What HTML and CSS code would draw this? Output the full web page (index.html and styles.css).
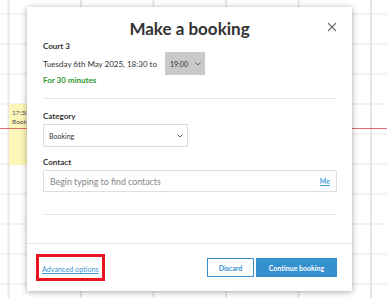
FILE: index.html
```html
<!DOCTYPE html>
<html lang="en">
<head>
	<title>Make a booking</title>
	<link rel="stylesheet" href="styles.css">
</head>

<body>
	<div id="calendar">
		<div class="event">
			<p>17:30</p>
			<p>Booking</p>
		</div>
		<div class="now-line"></div>
	</div>

	<div class="modal">
		<div class="modal-head">
			<h1>Make a booking</h1>
			<span class="close">
				<svg width="10" height="10" viewBox="0 0 10 10"><path d="M1 1L9 9M9 1L1 9" stroke="#6b6b6b" stroke-width="1.1" fill="none"/></svg>
			</span>
		</div>

		<div class="modal-body">
			<p class="label">Court 3</p>
			<div class="date-row">
				<span>Tuesday 6th May 2025, 18:30 to</span>
				<div class="time-select">
					<span>19:00</span>
					<svg width="6" height="4" viewBox="0 0 6 4"><path d="M0.5 0.5L3 3L5.5 0.5" stroke="#555" stroke-width="0.9" fill="none"/></svg>
				</div>
			</div>
			<p class="duration">For 30 minutes</p>

			<div class="divider"></div>

			<p class="label field-label">Category</p>
			<div class="select">
				<span>Booking</span>
				<svg width="6" height="4" viewBox="0 0 6 4"><path d="M0.5 0.5L3 3L5.5 0.5" stroke="#555" stroke-width="0.9" fill="none"/></svg>
			</div>

			<p class="label field-label contact-label">Contact</p>
			<div class="input">
				<span class="placeholder">Begin typing to find contacts</span>
				<a href="#" class="me">Me</a>
			</div>

			<div class="divider last"></div>
		</div>

		<div class="modal-foot">
			<div class="highlight">
				<a href="#">Advanced options</a>
			</div>
			<div class="buttons">
				<button class="discard">Discard</button>
				<button class="continue">Continue booking</button>
			</div>
		</div>
	</div>
</body>
</html>
```

FILE: styles.css
```css
body {
	margin: 0;
	padding: 0;
	font-family: 'Lato', 'Open Sans', sans-serif;
	color: #333;
}

p {
	margin: 0;
}

#calendar {
	position: relative;
	width: 387px;
	height: 298px;
	background-color: #fff;
	background-image: linear-gradient(to right, #e6e6e6 1.5px, transparent 1.5px), linear-gradient(to bottom, #e6e6e6 1.5px, transparent 1.5px);
	background-size: 72.5px 100%, 100% 30px;
	background-position: 7.5px 0, 0 13.5px;
}

.event {
	position: absolute;
	left: 9px;
	top: 104px;
	width: 60px;
	height: 61px;
	background: #fcf6b9;
	padding: 4px 3px;
	box-sizing: border-box;
	font-size: 6.5px;
	line-height: 9px;
	color: #555;
}

.now-line {
	position: absolute;
	left: 0;
	right: 0;
	top: 128px;
	height: 1px;
	background: #e26b6b;
}

.modal {
	position: absolute;
	left: 27px;
	top: 7px;
	width: 325px;
	height: 284px;
	background: #fff;
	box-shadow: 0 1px 6px rgba(0, 0, 0, 0.35);
	display: flex;
	flex-direction: column;
}

.modal-head {
	position: relative;
	padding-top: 10px;
	text-align: center;
}

.modal-head h1 {
	margin: 0;
	font-size: 17px;
	line-height: 24px;
	font-weight: 700;
	color: #333;
}

.close {
	position: absolute;
	right: 15px;
	top: 15px;
	line-height: 0;
}

.modal-body {
	padding: 0 15px 0 16px;
}

.label {
	font-size: 8px;
	line-height: 10px;
	font-weight: 700;
	color: #333;
}

.date-row {
	margin-top: 1px;
	height: 23px;
	display: flex;
	align-items: center;
	font-size: 8px;
}

.time-select {
	margin-left: 8px;
	width: 40px;
	height: 23px;
	background: #c9c9c9;
	display: flex;
	align-items: center;
	justify-content: space-between;
	padding: 0 4px 0 5px;
	box-sizing: border-box;
	font-size: 7px;
}

.duration {
	font-size: 8px;
	line-height: 10px;
	color: #2e9a2e;
	font-weight: 700;
}

.divider {
	margin-top: 13px;
	height: 1px;
	background: #e6e6e6;
}

.divider.last {
	margin-top: 22px;
}

.field-label {
	margin-top: 12px;
}

.contact-label {
	margin-top: 10px;
}

.select {
	margin-top: 3px;
	width: 145px;
	height: 23px;
	border: 1px solid #dcdcdc;
	box-sizing: border-box;
	display: flex;
	align-items: center;
	justify-content: space-between;
	padding: 0 4px 0 5px;
	font-size: 7px;
}

.input {
	margin-top: 3px;
	height: 22px;
	border: 1px solid #dedede;
	box-sizing: border-box;
	display: flex;
	align-items: center;
	justify-content: space-between;
	padding: 0 6px 0 6px;
	font-size: 8.8px;
}

.placeholder {
	color: #858585;
}

.me {
	color: #4aa0da;
	font-weight: 700;
	font-size: 7px;
}

.modal-foot {
	margin-top: auto;
	height: 48px;
	border-top: 1px solid #e6e6e6;
	box-sizing: border-box;
	display: flex;
	align-items: center;
	justify-content: space-between;
	padding: 0 15px 0 16px;
}

.highlight {
	margin-left: -7px;
	border: 3px solid #e8141e;
	padding: 3px 3px;
	line-height: 11px;
}

.highlight a {
	font-size: 7.2px;
	color: #3f98d6;
}

.buttons {
	display: flex;
	gap: 2px;
}

button {
	font-family: 'Lato', sans-serif;
	font-size: 7px;
	font-weight: 700;
	height: 19px;
	cursor: pointer;
}

.discard {
	width: 47px;
	background: #fff;
	color: #3a93d1;
	border: 1px solid #3a93d1;
}

.continue {
	width: 81px;
	background: #3590cf;
	color: #fff;
	border: 1px solid #3590cf;
}
```
